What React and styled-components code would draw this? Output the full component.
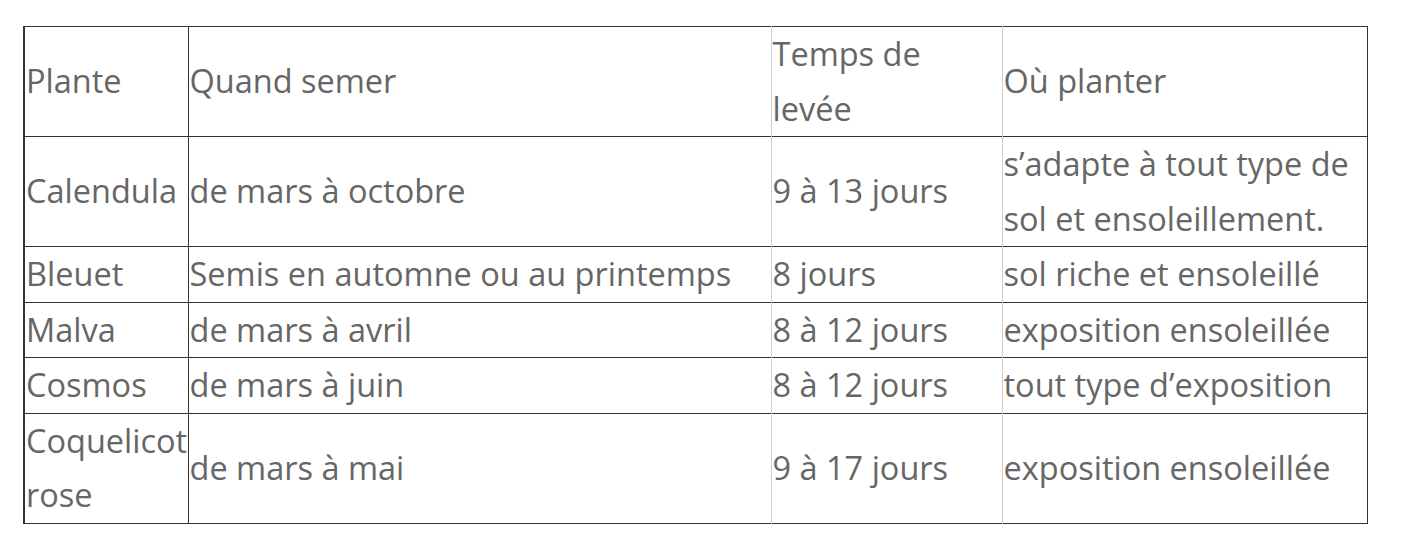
import React from "react";
import styled, { createGlobalStyle } from "styled-components";

const GlobalStyle = createGlobalStyle`
	html, body {
		margin: 0;
		padding: 0;
		background: #fff;
	}
	body {
		font-family: "Open Sans", "Noto Sans", sans-serif;
	}
`;

const Page = styled.div`
	padding: 26px 0 0 23px;
`;

const Table = styled.table`
	border-collapse: collapse;
	table-layout: fixed;
	width: 1343px;
	color: #666;
	font-size: 32.5px;
	line-height: 54.5px;
	border-left: 2px solid #333;
	border-right: 1px solid #333;
	border-top: 1px solid #333;
	border-bottom: 1px solid #333;
`;

const Cell = styled.td`
	box-sizing: border-box;
	padding: 0 0 0 1px;
	vertical-align: middle;
	text-align: left;
	font-weight: 400;
	border-top: 1px solid #333;
	border-right: 1px solid ${({ $light }) => ($light ? "#cfcfcf" : "#333")};
	width: ${({ $w }) => $w}px;
	overflow: hidden;
`;

const rows = [
	["Calendula", "de mars à octobre", "9 à 13 jours", "s’adapte à tout type de sol et ensoleillement."],
	["Bleuet", "Semis en automne ou au printemps", "8 jours", "sol riche et ensoleillé"],
	["Malva", "de mars à avril", "8 à 12 jours", "exposition ensoleillée"],
	["Cosmos", "de mars à juin", "8 à 12 jours", "tout type d’exposition"],
	["Coquelicot rose", "de mars à mai", "9 à 17 jours", "exposition ensoleillée"],
];

const widths = [164, 583, 231, 365];

const Row = ({ cells, as }) => (
	<tr>
		{cells.map((c, i) => (
			<Cell key={i} as={as} $w={widths[i]} $light={i === 1 || i === 2}>
				{c}
			</Cell>
		))}
	</tr>
);

export default function App() {
	return (
		<Page>
			<GlobalStyle />
			<Table>
				<thead>
					<Row as="th" cells={["Plante", "Quand semer", "Temps de levée", "Où planter"]} />
				</thead>
				<tbody>
					{rows.map((r) => (
						<Row key={r[0]} cells={r} />
					))}
				</tbody>
			</Table>
		</Page>
	);
}
